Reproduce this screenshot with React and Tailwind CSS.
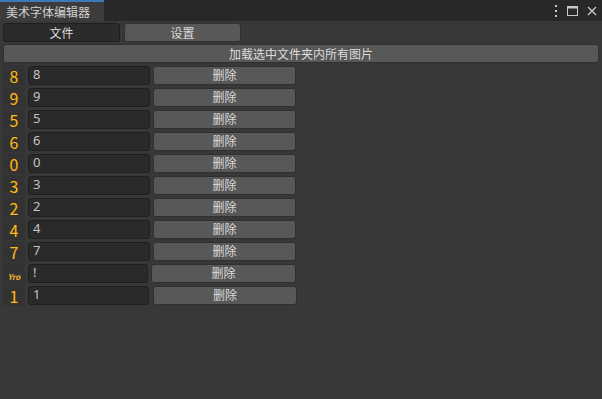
import React from 'react'

const rows = [
  { glyph: '8', value: '8', input: 'w-[122px]', btn: 'w-[143px] ml-[3px]' },
  { glyph: '9', value: '9', input: 'w-[122px]', btn: 'w-[143px] ml-[3px]' },
  { glyph: '5', value: '5', input: 'w-[122px]', btn: 'w-[143px] ml-[3px]' },
  { glyph: '6', value: '6', input: 'w-[122px]', btn: 'w-[143px] ml-[3px]' },
  { glyph: '0', value: '0', input: 'w-[122px]', btn: 'w-[143px] ml-[3px]' },
  { glyph: '3', value: '3', input: 'w-[122px]', btn: 'w-[143px] ml-[3px]' },
  { glyph: '2', value: '2', input: 'w-[122px]', btn: 'w-[143px] ml-[3px]' },
  { glyph: '4', value: '4', input: 'w-[122px]', btn: 'w-[143px] ml-[3px]' },
  { glyph: '7', value: '7', input: 'w-[122px]', btn: 'w-[143px] ml-[3px]' },
  { glyph: 'Yro', value: '!', input: 'w-[120px]', btn: 'w-[145px] ml-[3px]', small: true },
  { glyph: '1', value: '1', input: 'w-[121px]', btn: 'w-[144px] ml-[4px]' },
]

function Glyph({ text, small }) {
  return (
    <div className="w-[22px] h-[21px] flex items-end justify-center bg-[#333333]">
      <span
        className={small
          ? "text-[8px] leading-[14px] italic font-bold text-[#f2b632]"
          : "text-[16px] leading-[19px] text-[#f5bb2e] [text-shadow:0_0_1px_#5a3a00,0_0_1px_#5a3a00]"}
      >
        {text}
      </span>
    </div>
  )
}

export default function App() {
  return (
    <div className="w-[602px] h-[399px] bg-[#383838] flex flex-col font-['Noto_Sans_CJK_SC','Noto_Sans',sans-serif] text-[12px] text-[#d4d4d4] overflow-hidden">
      <div className="h-[21px] shrink-0 bg-[#282828] flex items-stretch justify-between">
        <div className="w-[104px] bg-[#3c3c3c] border-t-2 border-[#3a79bb] flex items-center pl-[6px] text-[12px] text-[#d2d2d2] leading-none">
          美术字体编辑器
        </div>
        <div className="flex items-center gap-[9px] pr-[5px] text-[#c8c8c8]">
          <svg width="4" height="12" viewBox="0 0 4 12">
            <rect x="1" y="0" width="2" height="2" fill="#c8c8c8" />
            <rect x="1" y="5" width="2" height="2" fill="#c8c8c8" />
            <rect x="1" y="10" width="2" height="2" fill="#c8c8c8" />
          </svg>
          <svg width="11" height="10" viewBox="0 0 11 10">
            <rect x="0.5" y="0.5" width="10" height="9" fill="none" stroke="#c8c8c8" />
            <rect x="0.5" y="0.5" width="10" height="2" fill="#c8c8c8" />
          </svg>
          <svg width="10" height="10" viewBox="0 0 10 10">
            <path d="M1 1L9 9M9 1L1 9" stroke="#c8c8c8" strokeWidth="1.4" />
          </svg>
        </div>
      </div>

      <div className="flex flex-col px-[3px] pt-[2px]">
        <div className="flex gap-[4px] h-[19px]">
          <div className="w-[117px] bg-[#2b2b2b] border border-[#1e1e1e] rounded-[3px] flex items-center justify-center text-[#dcdcdc]">
            文件
          </div>
          <div className="w-[117px] bg-[#585858] border border-[#303030] rounded-[3px] flex items-center justify-center text-[#dcdcdc]">
            设置
          </div>
        </div>

        <div className="mt-[2px] h-[19px] w-[596px] bg-[#585858] border border-[#303030] rounded-[3px] flex items-center justify-center text-[#dcdcdc]">
          加载选中文件夹内所有图片
        </div>

        <div className="flex flex-col mt-[1px]">
          {rows.map((r, i) => (
            <div key={i} className="flex items-center h-[22px]">
              <Glyph text={r.glyph} small={r.small} />
              <div className={`${r.input} ml-[3px] h-[19px] bg-[#2a2a2a] border border-[#1f1f1f] rounded-[3px] flex items-center pl-[4px] text-[13px] text-[#c4c4c4] font-['Noto_Sans',sans-serif]`}>
                {r.value}
              </div>
              <div className={`${r.btn} h-[19px] bg-[#585858] border border-[#303030] rounded-[3px] flex items-center justify-center text-[#dcdcdc]`}>
                删除
              </div>
            </div>
          ))}
        </div>
      </div>
    </div>
  )
}
